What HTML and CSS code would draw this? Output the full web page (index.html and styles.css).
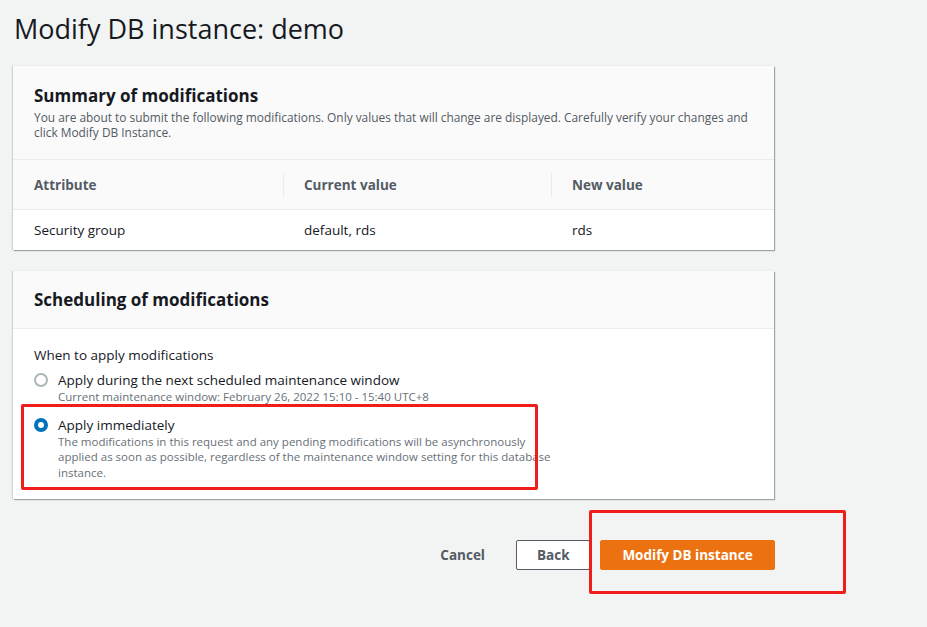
FILE: index.html
```html
<!DOCTYPE html>
<html>
<head>
<meta charset="utf-8">
<link rel="stylesheet" href="styles.css">
</head>
<body>
<div class="page">
  <h1 class="title">Modify DB instance: demo</h1>

  <section class="card">
    <div class="card-header">
      <h2>Summary of modifications</h2>
      <p class="desc">You are about to submit the following modifications. Only values that will change are displayed. Carefully verify your changes and click Modify DB Instance.</p>
    </div>
    <div class="table">
      <div class="row head">
        <div class="cell">Attribute</div>
        <div class="cell sep">Current value</div>
        <div class="cell sep">New value</div>
      </div>
      <div class="row">
        <div class="cell">Security group</div>
        <div class="cell">default, rds</div>
        <div class="cell">rds</div>
      </div>
    </div>
  </section>

  <section class="card sched">
    <div class="card-header small">
      <h2>Scheduling of modifications</h2>
    </div>
    <div class="card-body">
      <div class="label">When to apply modifications</div>
      <div class="option">
        <span class="radio"></span>
        <div class="opt-text">
          <div class="opt-title">Apply during the next scheduled maintenance window</div>
          <div class="opt-desc">Current maintenance window: February 26, 2022 15:10 - 15:40 UTC+8</div>
        </div>
      </div>
      <div class="option second">
        <span class="radio checked"></span>
        <div class="opt-text">
          <div class="opt-title">Apply immediately</div>
          <div class="opt-desc narrow">The modifications in this request and any pending modifications will be asynchronously applied as soon as possible, regardless of the maintenance window setting for this database instance.</div>
        </div>
        <div class="annot annot-1"></div>
      </div>
    </div>
  </section>

  <div class="actions">
    <button class="btn link">Cancel</button>
    <button class="btn normal">Back</button>
    <div class="primary-wrap">
      <button class="btn primary">Modify DB instance</button>
      <div class="annot annot-2"></div>
    </div>
  </div>
</div>
</body>
</html>
```
FILE: styles.css
```css
* { box-sizing: border-box; }
html, body { margin: 0; padding: 0; }
body {
  background: #f2f3f3;
  font-family: "Open Sans", "Noto Sans", sans-serif;
  color: #16191f;
  width: 927px;
  height: 627px;
  overflow: hidden;
}
.page {
  padding: 10px 0 0 13px;
  width: 775px;
}
.title {
  margin: 0 0 0 1px;
  font-weight: 400;
  font-size: 27px;
  line-height: 38px;
  color: #16191f;
  height: 56px;
}
.card {
  background: #fff;
  box-shadow: 1px 1px 1px 0 rgba(0, 28, 36, 0.35), -1px 0 1px 0 rgba(0,28,36,0.15);
  width: 761px;
}
.card-header {
  background: #fafafa;
  padding: 19px 8px 18px 21px;
  border-bottom: 1px solid #eaeded;
  height: 94px;
}
.card-header h2 {
  margin: 0;
  font-size: 17px;
  font-weight: 700;
  line-height: 22px;
}
.card-header .desc {
  margin: 3px 0 0;
  font-size: 11.9px;
  line-height: 15px;
  color: #545b64;
}
.card-header.small {
  height: 58px;
  padding-top: 18px;
}
.table .row {
  display: grid;
  grid-template-columns: 270px 268px 1fr;
  align-items: center;
}
.table .row.head {
  background: #fafafa;
  height: 50px;
  border-bottom: 1px solid #eaeded;
}
.table .row:not(.head) { height: 40px; }
.cell {
  padding-left: 21px;
  font-size: 13.5px;
  color: #16191f;
}
.head .cell {
  font-weight: 700;
  color: #545b64;
  line-height: 24px;
}
.head .cell.sep { border-left: 1px solid #eaeded; padding-left: 20px; }
.sched { margin-top: 21px; }
.card-body {
  padding: 17px 20px 19px 21px;
}
.label {
  font-size: 13.5px;
  line-height: 18px;
}
.option {
  display: flex;
  align-items: flex-start;
  margin-top: 7px;
  position: relative;
}
.option.second { margin-top: 11px; }
.radio {
  width: 14px;
  height: 14px;
  border-radius: 50%;
  border: 2px solid #aab7b8;
  margin: 2px 10px 0 0;
  flex: none;
  background: #fff;
}
.radio.checked {
  border: 4px solid #0073bb;
}
.opt-title {
  font-size: 13.5px;
  line-height: 18px;
}
.opt-desc {
  margin-top: 0;
  font-size: 11.5px;
  line-height: 15.5px;
  color: #687078;
}
.opt-desc.narrow { width: 505px; }
.annot {
  position: absolute;
  border: 3px solid #f01d1d;
  border-radius: 2px;
  pointer-events: none;
}
.annot-1 {
  left: -13px;
  top: -12px;
  width: 517px;
  height: 86px;
}
.actions {
  display: flex;
  justify-content: flex-end;
  align-items: center;
  margin-top: 41px;
  gap: 0;
}
.btn {
  font-family: inherit;
  font-size: 13.5px;
  font-weight: 700;
  border-radius: 2px;
  height: 30px;
  padding: 0 20px;
  cursor: pointer;
}
.btn.link {
  background: none;
  border: none;
  color: #545b64;
  margin-right: 11px;
}
.btn.normal {
  background: #fff;
  border: 1px solid #545b64;
  color: #545b64;
  width: 74px;
  margin-right: 10px;
}
.primary-wrap { position: relative; }
.btn.primary {
  background: #ec7211;
  border: 1px solid #ec7211;
  color: #fff;
  width: 175px;
}
.annot-2 {
  left: -11px;
  top: -30px;
  width: 257px;
  height: 84px;
}
```
